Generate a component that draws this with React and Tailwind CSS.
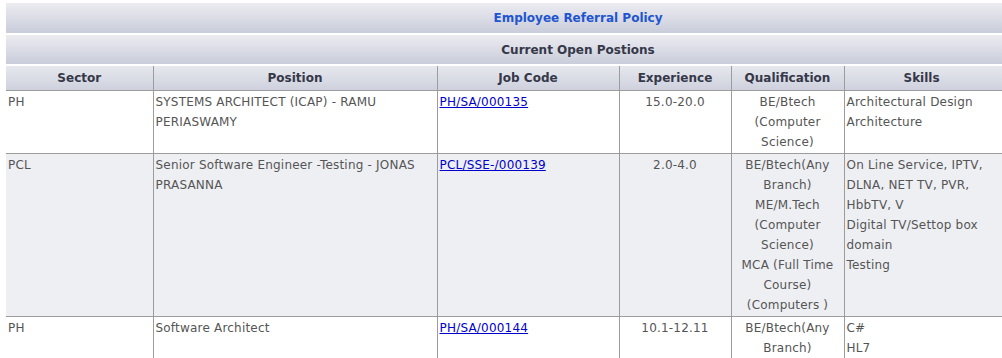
import React from "react";

const rows = [
  {
    sector: "PH",
    position: ["SYSTEMS ARCHITECT (ICAP) - RAMU", "PERIASWAMY"],
    code: "PH/SA/000135",
    exp: "15.0-20.0",
    qual: ["BE/Btech", "(Computer", "Science)"],
    skills: ["Architectural Design", "Architecture"],
    alt: false,
  },
  {
    sector: "PCL",
    position: ["Senior Software Engineer -Testing - JONAS", "PRASANNA"],
    code: "PCL/SSE-/000139",
    exp: "2.0-4.0",
    qual: [
      "BE/Btech(Any",
      "Branch)",
      "ME/M.Tech",
      "(Computer",
      "Science)",
      "MCA (Full Time",
      "Course)",
      "(Computers )",
    ],
    skills: [
      "On Line Service, IPTV,",
      "DLNA, NET TV, PVR,",
      "HbbTV, V",
      "Digital TV/Settop box",
      "domain",
      "Testing",
    ],
    alt: true,
  },
  {
    sector: "PH",
    position: ["Software Architect"],
    code: "PH/SA/000144",
    exp: "10.1-12.11",
    qual: ["BE/Btech(Any", "Branch)"],
    skills: ["C#", "HL7"],
    alt: false,
  },
];

const Lines = ({ items }) =>
  items.map((t, i) => <div key={i} className="whitespace-nowrap">{t}</div>);

export default function App() {
  return (
    <div className="w-[1002px] h-[358px] overflow-hidden bg-white pt-[3px] pl-[6px] font-['DejaVu_Sans',sans-serif] text-[12px]">
      <table className="w-[1144px] table-fixed border-collapse">
        <colgroup>
          <col className="w-[147px]" />
          <col className="w-[284px]" />
          <col className="w-[182px]" />
          <col className="w-[112px]" />
          <col className="w-[113px]" />
          <col />
        </colgroup>
        <tbody>
          {/* Title */}
          <tr>
            <td
              colSpan={6}
              className="h-[31px] border-b-2 border-white bg-gradient-to-b from-[#ececf1] to-[#c9ccda] text-center align-middle font-bold text-[#2155cf]"
            >
              Employee Referral Policy
            </td>
          </tr>
          <tr>
            <td
              colSpan={6}
              className="h-[31px] border-b-2 border-white bg-gradient-to-b from-[#ececf1] to-[#c9ccda] text-center align-middle font-bold text-[#353848]"
            >
              Current Open Postions
            </td>
          </tr>
          {/* Header */}
          <tr className="bg-gradient-to-b from-[#e8e9ef] to-[#ced1dd] text-[#353848] font-bold">
            <th className="h-[25px] border-b border-[#9c9c9c] text-center">Sector</th>
            <th className="border-b border-l border-[#9c9c9c] text-center">Position</th>
            <th className="border-b border-l border-[#9c9c9c] text-center">Job Code</th>
            <th className="border-b border-l border-[#9c9c9c] text-center">Experience</th>
            <th className="border-b border-l border-[#9c9c9c] text-center">Qualification</th>
            <th className="border-b border-l border-[#9c9c9c] pl-[59px] text-left">Skills</th>
          </tr>
          {rows.map((r, i) => (
            <tr
              key={i}
              className={`${r.alt ? "bg-[#eeeff3]" : "bg-white"} align-top leading-[20px] tracking-[0.2px] text-[#555]`}
            >
              <td className="border-b border-[#9c9c9c] pl-[2px] pt-px pb-px">{r.sector}</td>
              <td className="border-b border-l border-[#9c9c9c] pl-[2px] pt-px pb-px">
                <Lines items={r.position} />
              </td>
              <td className="border-b border-l border-[#9c9c9c] pl-[2px] pt-px pb-px">
                <a href="#" className="text-[#0000cc] underline">
                  {r.code}
                </a>
              </td>
              <td className="border-b border-l border-[#9c9c9c] pt-px pb-px text-center">{r.exp}</td>
              <td className="border-b border-l border-[#9c9c9c] pt-px pb-px text-center">
                <Lines items={r.qual} />
              </td>
              <td className="border-b border-l border-[#9c9c9c] pl-[2px] pt-px pb-px">
                <Lines items={r.skills} />
              </td>
            </tr>
          ))}
        </tbody>
      </table>
    </div>
  );
}
